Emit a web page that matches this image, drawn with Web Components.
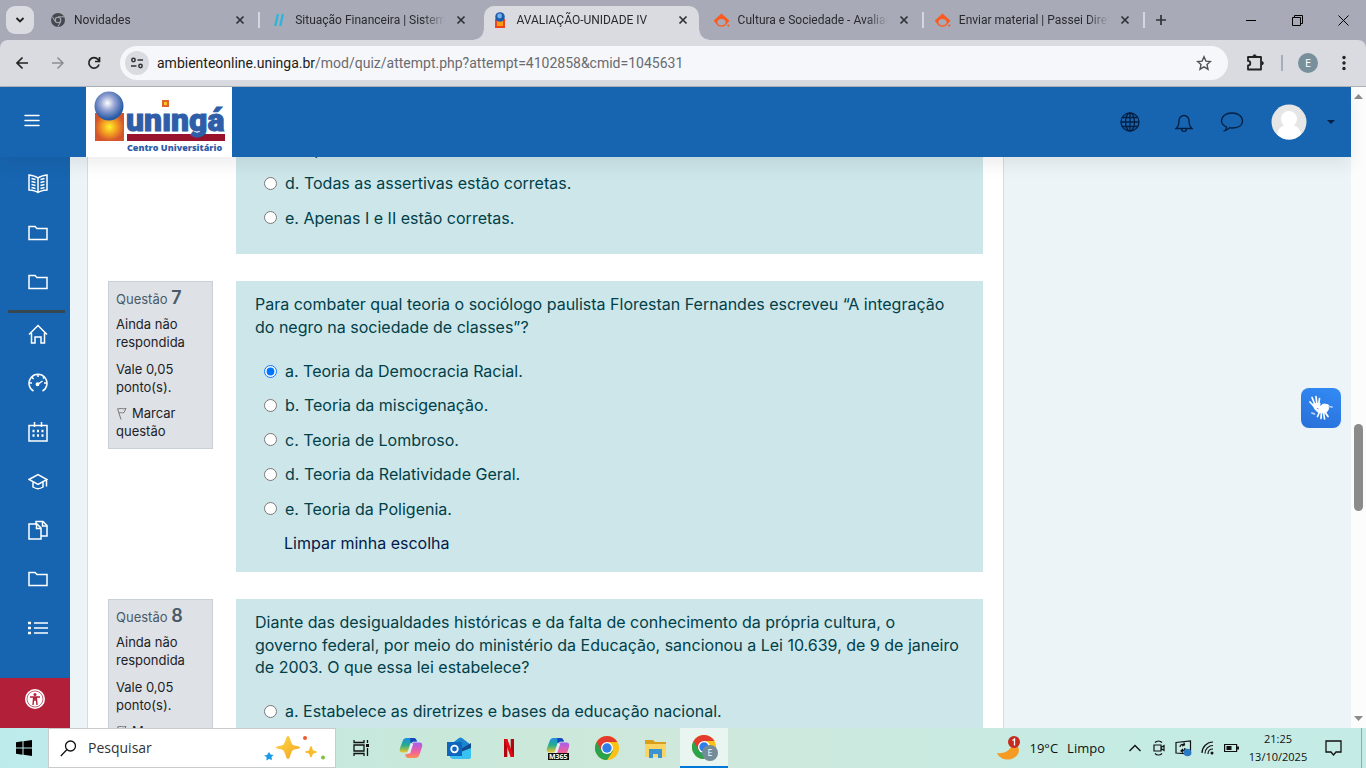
<!DOCTYPE html>
<html lang="pt-br">
<head>
<meta charset="utf-8">
<meta name="viewport" content="width=device-width, initial-scale=1">
<title>AVALIAÇÃO-UNIDADE IV</title>
<style>
	:root {
		--font-ui: "Open Sans", "Noto Sans", sans-serif;
		--font-chrome: Roboto, "Open Sans", sans-serif;
		--font-page: Inter, "Open Sans", sans-serif;
		--chrome-strip: #a8abb7;
		--chrome-bar: #dadbe0;
		--brand: #1765b0;
		--question: #cde6e9;
		--page: #ecf4f8;
	}
	html, body { height: 100%; margin: 0; }
	body {
		display: flex;
		flex-direction: column;
		overflow: hidden;
		font-family: var(--font-ui);
	}
</style>
</head>
<body>
	<tab-strip>
		<browser-tab icon="chrome">Novidades</browser-tab>
		<browser-tab icon="slashes" noline>Situação Financeira | Sistema</browser-tab>
		<browser-tab icon="uninga" active>AVALIAÇÃO-UNIDADE IV</browser-tab>
		<browser-tab icon="passei">Cultura e Sociedade - Avaliaç</browser-tab>
		<browser-tab icon="passei">Enviar material | Passei Direto</browser-tab>
	</tab-strip>
	<browser-toolbar>
		<span slot="host">ambienteonline.uninga.br</span>
		<span slot="path">/mod/quiz/attempt.php?attempt=4102858&amp;cmid=1045631</span>
	</browser-toolbar>
	<moodle-page>
		<quiz-question>
			<answer-option>c. Apenas</answer-option>
			<answer-option>d. Todas as assertivas estão corretas.</answer-option>
			<answer-option>e. Apenas I e II estão corretas.</answer-option>
		</quiz-question>
		<quiz-question number="7" clear>
			<span slot="text">Para combater qual teoria o sociólogo paulista Florestan Fernandes escreveu “A integração do negro na sociedade de classes”?</span>
			<answer-option checked>a. Teoria da Democracia Racial.</answer-option>
			<answer-option>b. Teoria da miscigenação.</answer-option>
			<answer-option>c. Teoria de Lombroso.</answer-option>
			<answer-option>d. Teoria da Relatividade Geral.</answer-option>
			<answer-option>e. Teoria da Poligenia.</answer-option>
		</quiz-question>
		<quiz-question number="8">
			<span slot="text">Diante das desigualdades históricas e da falta de conhecimento da própria cultura, o governo federal, por meio do ministério da Educação, sancionou a Lei 10.639, de 9 de janeiro de 2003. O que essa lei estabelece?</span>
			<answer-option>a. Estabelece as diretrizes e bases da educação nacional.</answer-option>
		</quiz-question>
	</moodle-page>
	<task-bar></task-bar>

<script>
// shared drawings, used inside several shadow roots
const ICONS = {
	chrome: `<svg width="14" height="14" viewBox="0 0 14 14"><circle cx="7" cy="7" r="7" fill="#45484d"/><path d="M7 3.8h6.2M4.2 8.6 1.2 3.5M9.8 8.6 6.8 13.8" stroke="#a8abb7"/><circle cx="7" cy="7" r="3.3" fill="#a8abb7"/><circle cx="7" cy="7" r="2.2" fill="#45484d"/></svg>`,
	slashes: `<svg width="14" height="14" viewBox="0 0 14 14"><path d="M3.2 13 6 1M8.2 13 11 1" stroke="#27b6dc" stroke-width="2.2"/></svg>`,
	uninga: `<svg width="14" height="16" viewBox="0 0 14 16"><path d="M2 7h10v9H2z" fill="#f0431d"/><path d="M4 9h6v5H4z" fill="#fb9b12"/><circle cx="7" cy="5" r="4.8" fill="#1c5cae"/><circle cx="6.6" cy="4" r="2.4" fill="#77b2e6"/></svg>`,
	passei: `<svg width="16" height="15" viewBox="0 0 16 15"><path fill="#fb5b21" fill-rule="evenodd" d="M7.500.4 14.800 7a1 1 0 0 1 0 1.400L12.600 11a6 6 0 0 1-10.200 0L.3 8.400a1 1 0 0 1 0-1.400zM7.500 6c-2.500 0-4.100 1.600-4.100 3.300S5 12.400 7.500 12.400s4.100-1.300 4.100-3.100S10 6 7.500 6z"/><circle cx="14.300" cy="12.600" r="1.100" fill="#fb5b21"/></svg>`,
	close: `<svg width="10" height="10" viewBox="0 0 10 10"><path d="m1.500 1.500 7 7m0-7-7 7" stroke="#303238" stroke-width="1.700"/></svg>`,
	folder: `<path d="M1 3.500h6l2 2h10v11H1z"/>`,
	bigChrome: `<svg width="24" height="24" viewBox="0 0 24 24"><circle cx="12" cy="12" r="12" fill="#fbc116"/><path d="M12 12 1.600 6A12 12 0 0 0 12 24l6-9z" fill="#2ba24c"/><path d="M1.600 6A12 12 0 0 1 22.400 6H12v6l-5.200 3z" fill="#e33b2e"/><circle cx="12" cy="12" r="6" fill="#fff"/><circle cx="12" cy="12" r="4.700" fill="#2f7de9"/></svg>`,
	copilot: `<svg width="24" height="22" viewBox="0 0 26 24"><defs><linearGradient id="a" x2="0" y2="1"><stop stop-color="#1b8de6"/><stop offset=".5" stop-color="#26ad8b"/><stop offset="1" stop-color="#f4c629"/></linearGradient><linearGradient id="b" x2="0" y2="1"><stop stop-color="#a55df0"/><stop offset=".6" stop-color="#f0609a"/><stop offset="1" stop-color="#fb9250"/></linearGradient></defs><path d="M8 1h8c2 0 3 2 3.500 4h-4c-2 0-3 1-3.500 3l-2 6c-.7 2-1.500 3-3.500 3H4c-3 0-4-2-3-5L4 4c.8-2 2-3 4-3z" fill="url(#a)"/><path d="M12 1h4c2 0 3 2 3.500 4h-4l-3 2z" fill="#1647bd"/><path d="M18 23h-8c-2 0-3-2-3.500-4 3 0 4-1 4.500-3l2-7c.7-2 1.500-3 3.500-3H22c3 0 4 2 3 5l-3 9c-.8 2-2 3-4 3z" fill="url(#b)"/><path d="m13 7-3.500 11h2.500L15.500 7z" fill="#e7edf3"/></svg>`
};

class BrowserTab extends HTMLElement {
	constructor() {
		super();
		this.attachShadow({ mode: 'open' });
	}

	connectedCallback() {
		this.shadowRoot.innerHTML = `
	<style>
		:host { display: block; flex: 1 1 0; min-width: 0; height: 40px; font: 12px var(--font-chrome); color: #282a2e; }
		.tab { position: relative; display: flex; align-items: center; gap: 8px; height: 34px; margin: 6px 3px 0 4px; padding: 0 8px 6px 8px; box-sizing: border-box; border-radius: 10px 10px 0 0; }
		.icon { display: flex; width: 16px; justify-content: center; flex: none; }
		.title { flex: 1; min-width: 0; overflow: hidden; white-space: nowrap; line-height: 20px; -webkit-mask-image: linear-gradient(to left, transparent, #000 22px); }
		button { display: flex; padding: 3px; border: 0; background: none; }
		:host(:not([active]):not([noline])) .tab::after { content: ""; position: absolute; right: -4px; top: 6px; width: 2px; height: 16px; background: #d5d7de; }
		:host([active]) .tab { background: var(--chrome-bar); }
		:host([active]) .tab::before, :host([active]) .tab::after { content: ""; position: absolute; bottom: 0; width: 10px; height: 10px; }
		:host([active]) .tab::before { right: 100%; background: radial-gradient(circle at 0 0, transparent 9px, var(--chrome-bar) 10px); }
		:host([active]) .tab::after { left: 100%; background: radial-gradient(circle at 100% 0, transparent 9px, var(--chrome-bar) 10px); }
	</style>
	<div class="tab">
		<span class="icon">${ICONS[this.getAttribute('icon')]}</span>
		<span class="title"><slot></slot></span>
		<button aria-label="Fechar">${ICONS.close}</button>
	</div>`;
	}
}

class TabStrip extends HTMLElement {
	constructor() {
		super();
		this.attachShadow({ mode: 'open' }).innerHTML = `
	<style>
		:host { display: flex; flex: none; height: 40px; background: var(--chrome-strip); }
		button { display: flex; align-items: center; justify-content: center; flex: none; padding: 0; border: 0; background: none; }
		.search { width: 28px; height: 28px; margin: 6px 4px 0 6px; border-radius: 9px; background: var(--chrome-bar); }
		.tabs { display: flex; flex: 0 1 1106px; min-width: 0; }
		.new { width: 33px; height: 40px; }
		.window { display: flex; margin-left: auto; }
		.window button { width: 46px; height: 40px; }
	</style>
	<button class="search" aria-label="Pesquisar guias"><svg width="10" height="8" viewBox="0 0 10 8"><path d="m1.500 2 3.500 3.500L8.500 2" fill="none" stroke="#222" stroke-width="1.900"/></svg></button>
	<div class="tabs"><slot></slot></div>
	<button class="new" aria-label="Nova guia"><svg width="12" height="12" viewBox="0 0 12 12"><path d="M6 1v10M1 6h10" stroke="#303238" stroke-width="1.700"/></svg></button>
	<div class="window">
		<button aria-label="Minimizar"><svg width="10" height="10"><path d="M0 5.500h10" stroke="#000"/></svg></button>
		<button aria-label="Restaurar"><svg width="11" height="11" fill="none" stroke="#000"><path d="M.5 2.500h8v8h-8zM2.500 2.500v-2h8v8h-2"/></svg></button>
		<button aria-label="Fechar janela"><svg width="11" height="11"><path d="m.5.5 10 10m0-10-10 10" stroke="#000"/></svg></button>
	</div>`;
	}
}

class BrowserToolbar extends HTMLElement {
	constructor() {
		super();
		this.attachShadow({ mode: 'open' }).innerHTML = `
	<style>
		:host { display: block; flex: none; background: var(--chrome-strip); }
		.bar { display: flex; align-items: center; height: 46px; padding-left: 4px; border-bottom: 1px solid #b0b1b6; border-radius: 8px 8px 0 0; background: var(--chrome-bar); }
		button { display: flex; align-items: center; justify-content: center; flex: none; width: 36px; height: 34px; padding: 0; border: 0; background: none; }
		.omnibox { display: flex; align-items: center; flex: 1; min-width: 0; height: 34px; margin-left: 8px; border-radius: 17px; background: #f6f7fa; }
		.omnibox .site { width: 24px; height: 24px; margin: 0 8px 0 5px; border-radius: 50%; background: var(--chrome-bar); }
		.url { flex: 1; min-width: 0; overflow: hidden; white-space: nowrap; font: 14px/20px var(--font-chrome); color: #696b70; outline: 0; }
		.host { color: #1c1d20; }
		.omnibox .star { width: 48px; }
		.ext { width: 53px; }
		.sep { width: 2px; height: 16px; background: #a5aebb; }
		.user { width: 50px; }
		.user span { width: 20px; border-radius: 50%; background: #78909c; color: #fff; font: 11px/20px var(--font-ui); }
		.menu { width: 22px; margin-right: 11px; }
	</style>
	<div class="bar">
		<button aria-label="Voltar"><svg width="14" height="14" fill="none" stroke="#222" stroke-width="1.700"><path d="M13 7H2m5.500-5.500L2 7l5.500 5.500"/></svg></button>
		<button aria-label="Avançar"><svg width="14" height="14" fill="none" stroke="#8d8f95" stroke-width="1.500"><path d="M1 7h11M6.500 1.500 12 7l-5.500 5.500"/></svg></button>
		<button aria-label="Recarregar"><svg width="14" height="14" fill="none" stroke="#222" stroke-width="1.700"><path d="M12 8.500A5.200 5.200 0 1 1 11 3.500l1.500 1.800M12.500 1v4.500H8"/></svg></button>
		<div class="omnibox">
			<button class="site" aria-label="Informações do site"><svg width="14" height="14" fill="none" stroke="#303238" stroke-width="1.500"><circle cx="3.500" cy="4" r="1.700"/><path d="M7.500 4H13M1 10h5.500"/><circle cx="10.500" cy="10" r="1.700"/></svg></button>
			<div class="url" role="textbox" aria-label="Endereço" contenteditable="true" spellcheck="false"><span class="host"><slot name="host"></slot></span><slot name="path"></slot></div>
			<button class="star" aria-label="Favoritar"><svg width="16" height="16" fill="none" stroke="#4d5056" stroke-width="1.400"><path d="m8 1.800 1.900 4.300 4.600.4-3.500 3.100 1 4.600L8 11.800l-4 2.400 1-4.600-3.500-3.100 4.600-.4z"/></svg></button>
		</div>
		<button class="ext" aria-label="Extensões"><svg width="18" height="18" fill="none" stroke="#222" stroke-width="1.800"><path d="M2 3h13v12.500H2v-4a2.300 2.300 0 0 0 0-4.600z" stroke-linejoin="round"/><path d="M7 2.400a1.600 1.600 0 0 1 3.200 0M15.600 7.500a1.700 1.700 0 0 1 0 3.400" fill="#222" stroke-width="1"/></svg></button>
		<span class="sep"></span>
		<button class="user" aria-label="Perfil"><span>E</span></button>
		<button class="menu" aria-label="Menu"><svg width="4" height="16" fill="#222"><circle cx="2" cy="2.500" r="1.700"/><circle cx="2" cy="8" r="1.700"/><circle cx="2" cy="13.500" r="1.700"/></svg></button>
	</div>`;
	}
}

class AppHeader extends HTMLElement {
	constructor() {
		super();
		this.attachShadow({ mode: 'open' }).innerHTML = `
	<style>
		:host { display: flex; align-items: center; flex: none; height: 70px; background: var(--brand); box-shadow: 0 8px 16px rgba(0, 0, 0, .07); z-index: 1; color: #051f42; }
		button { display: flex; align-items: center; justify-content: center; padding: 0; border: 0; background: none; color: inherit; }
		.drawer { align-self: flex-start; width: 86px; height: 66px; padding-right: 22px; }
		.brand { display: block; width: 146px; height: 70px; background: #fff; }
		.tools { display: flex; align-items: center; gap: 27px; margin-left: auto; padding-right: 16px; }
		.tools svg { fill: none; stroke: currentColor; stroke-width: 1.300; }
		.globe { margin-right: 8px; }
		.account { gap: 20px; }
		.account .caret { fill: currentColor; stroke: none; }
	</style>
	<button class="drawer" aria-label="Menu lateral"><svg width="16" height="13" stroke="#fff" stroke-width="1.500" stroke-linecap="round"><path d="M1 1.500h14M1 6.500h14M1 11.500h14"/></svg></button>
	<a class="brand" href="#" aria-label="Uningá">
		<svg width="146" height="70">
			<defs>
				<radialGradient id="ball" cx=".45" cy=".4" r=".55"><stop stop-color="#fff"/><stop offset=".45" stop-color="#98a5d4"/><stop offset="1" stop-color="#285ba6"/></radialGradient>
				<radialGradient id="sun"><stop stop-color="#fff22e"/><stop offset=".5" stop-color="#f3a021"/><stop offset="1" stop-color="#d4552b"/></radialGradient>
			</defs>
			<path d="M9 26h29v28H9z" fill="url(#sun)"/>
			<circle cx="23" cy="19" r="14.500" fill="url(#ball)"/>
			<path d="M41 47h98v7H41z" fill="#98122e"/>
			<text x="40" y="44" fill="#2f5da8" stroke="#2f5da8" stroke-width="1" font-family="Roboto, Liberation Sans, sans-serif" font-weight="900" font-size="32">uningá</text>
			<path d="M75 17h10v9H75z" fill="#fff"/>
			<path d="M76 13h7v7h-7z" fill="#df6528"/><path d="M78 15h3v3h-3z" fill="#fbc42e"/>
			<text x="41" y="64" fill="#2f5da8" font-family="Open Sans, sans-serif" font-weight="800" font-size="9">Centro Universitário</text>
		</svg>
	</a>
	<div class="tools">
		<button class="globe" aria-label="Idioma"><svg width="20" height="20"><circle cx="10" cy="10" r="9"/><ellipse cx="10" cy="10" rx="4.500" ry="9"/><path d="M10 1v18M1 10h18M2.500 5.500h15M2.500 14.500h15"/></svg></button>
		<button aria-label="Notificações"><svg width="18" height="20"><path d="M1 16.500c2-1.500 3-3 3-8a5 5 0 0 1 10 0c0 5 1 6.500 3 8zM6.500 17a2.500 2.500 0 0 0 5 0"/></svg></button>
		<button aria-label="Mensagens"><svg width="24" height="20"><path d="M5 18.500c1.300-1 1.500-2 1.500-3.500C3.500 13.500 1.500 11.500 1.500 9c0-4.500 4.500-8 10.500-8s10.500 3.500 10.500 8-4.500 7-10.500 7c-1 0-2 0-2.500-.3-1 1.300-2.500 2.500-4.500 2.800z"/></svg></button>
		<button class="account" aria-label="Menu do usuário">
			<svg width="36" height="36" viewBox="0 0 36 36"><defs><clipPath id="round"><circle cx="18" cy="18" r="17.500"/></clipPath></defs><g clip-path="url(#round)" stroke="none"><path d="M0 0h36v36H0z" fill="#e6e6e6"/><circle cx="18" cy="15" r="8" fill="#fff"/><path d="M6 36V30c1-5 4-8 8-9h8c4 1 7 4 8 9v6z" fill="#fff"/></g></svg>
			<svg class="caret" width="8" height="4"><path d="M0 0h8L4 4z"/></svg>
		</button>
	</div>`;
	}
}

const navIcons = [
	['Cursos', `<path d="M10 4c-2-1.500-5-2.500-9-3v15c4 .3 7 1 9 2.500 2-1.500 5-2.200 9-2.500V1c-4 .5-7 1.500-9 3zM10 4v14.500M3.500 4.500l4 1M3.500 7.500l4 1M3.500 10.500l4 1M3.500 13.500l4 1M16.500 4.500l-4 1M16.500 7.500l-4 1M16.500 10.500l-4 1M16.500 13.500l-4 1"/>`],
	['Pasta', ICONS.folder],
	['Pasta', ICONS.folder],
	['Início', `<path d="m1 10.500 9-9 9 9M3.500 9v10H7v-6h6v6h3.500V9"/>`],
	['Painel', `<path d="M5.500 18a9 9 0 1 1 9 0M10 1v3M1.500 10H4M16 10h2.500M3.600 4l2 2M16.400 4l-1.500 1.500M9.500 11.500 14.500 8"/><circle cx="9.500" cy="11.300" r="1.200" fill="#fff"/>`],
	['Calendário', `<path d="M1 3.500h18V19H1zM6.500 0v5M13.500 0v5"/><path d="M4.500 9h2M9 9h2M13.500 9h2M4.500 13.500h2M9 13.500h2M13.500 13.500h2" stroke-width="2.400"/>`],
	['Disciplinas', `<path d="m1 8.500 9-5 9 5-9 5zM5 11v5c3 2 7 2 10 0v-5M18.500 8.500v7"/>`],
	['Arquivos', `<path d="M1 4h8l4 4v11H1zM8.500 4v4.500H13M8 4V1.500h7l4 4V16h-6M14.500 1.500V6H19"/>`],
	['Pasta', ICONS.folder],
	['Lista', `<path d="M6 5h14M6 10h14M6 15h14"/><path d="M0 5h3M0 10h3M0 15h3" stroke-width="2.600"/>`]
];

class SideNav extends HTMLElement {
	constructor() {
		super();
		this.attachShadow({ mode: 'open' });
		const links = navIcons.map(([label, path], i) => `
			<a href="#" aria-label="${label}"><svg width="20" height="20" viewBox="0 0 20 20">${path}</svg></a>
			${i === 2 ? '<hr>' : ''}`).join('');
		this.shadowRoot.innerHTML = `
	<style>
		:host { display: flex; flex-direction: column; flex: none; width: 70px; background: var(--brand); }
		nav { flex: 1; min-height: 0; overflow: hidden; padding-top: 17px; }
		nav a { display: block; height: 20px; padding-left: 28px; }
		a + a { margin-top: 29px; }
		hr { height: 3px; margin: 18px 5px 11px 8px; border: 0; background: #37474f; }
		svg { display: block; fill: none; stroke: #fff; stroke-width: 1.500; }
		.access { display: flex; justify-content: center; height: 50px; padding: 11px 0 0; box-sizing: border-box; border: 0; background: #b21f38; }
		.access svg { stroke: none; }
	</style>
	<nav>${links}</nav>
	<button class="access" aria-label="Acessibilidade"><svg width="20" height="20"><circle cx="10" cy="10" r="10" fill="#fff"/><circle cx="10" cy="10" r="8" fill="none" stroke="#b21f38" stroke-width=".7"/><circle cx="10" cy="5.500" r="1.500" fill="#b21f38"/><path d="M5 8h10M10 8v4M8.700 8l-.7 8M11.300 8l.7 8" stroke="#b21f38" stroke-width="1.400"/></svg></button>`;
	}
}

class AnswerOption extends HTMLElement {
	constructor() {
		super();
		this.attachShadow({ mode: 'open' }).innerHTML = `
	<style>
		:host { display: block; }
		label { display: flex; align-items: center; gap: 8px; }
		input { width: 13px; height: 13px; margin: 0; accent-color: #0075ff; }
	</style>
	<label><input type="radio"><span><slot></slot></span></label>`;
	}

	connectedCallback() {
		this.input = this.shadowRoot.querySelector('input');
		this.input.checked = this.hasAttribute('checked');
		this.input.addEventListener('change', () => {
			this.parentElement.querySelectorAll('answer-option').forEach(o => {
				if (o !== this) o.input.checked = false;
			});
		});
	}
}

class QuizQuestion extends HTMLElement {
	constructor() {
		super();
		this.attachShadow({ mode: 'open' });
	}

	connectedCallback() {
		const number = this.getAttribute('number');
		this.shadowRoot.innerHTML = `
	<style>
		:host { display: flex; align-items: flex-start; gap: 23px; font-family: var(--font-page); }
		.info { flex: none; width: 105px; box-sizing: border-box; padding: 7px 7px 8px; border: 1px solid #cad0d7; background: #dee2e6; font-size: 13px; line-height: 18px; color: #1d2125; }
		.info.empty { visibility: hidden; }
		.info > * { margin: 0 0 9px; font-weight: 400; font-size: inherit; }
		.info h3 { margin-bottom: 6px; line-height: 20px; color: #495a66; }
		.info h3 b { font-size: 18px; line-height: 18px; font-weight: 600; }
		.info p + p { margin-bottom: 8px; }
		.info a { display: block; margin: 0; color: inherit; text-decoration: none; }
		.info svg { vertical-align: -2px; margin-right: 4px; }
		.content { flex: 1; min-width: 0; box-sizing: border-box; padding: 12px 22px 25px 19px; background: var(--question); color: #004049; font-size: 16px; line-height: 1.4; }
		:host([clear]) .content { padding-bottom: 18px; }
		.text { margin: 0 0 22px; }
		.answers { display: flex; flex-direction: column; gap: 12px; padding-left: 9px; }
		.answers a { padding-left: 20px; color: #001a4a; text-decoration: none; }
	</style>
	<div class="info ${number ? '' : 'empty'}">
		${number ? `<h3>Questão <b>${number}</b></h3>
		<p>Ainda não respondida</p>
		<p>Vale 0,05 ponto(s).</p>
		<a href="#"><svg width="12" height="13" fill="none" stroke="#777"><path d="M1.500 1.500 5 12.500M2 2c3-1.500 4 .5 8-.5L8 5.500c-2 1-3-.5-5 .5"/></svg>Marcar questão</a>` : ''}
	</div>
	<div class="content">
		${number ? '<p class="text"><slot name="text"></slot></p>' : ''}
		<div class="answers">
			<slot></slot>
			${this.hasAttribute('clear') ? '<a href="#">Limpar minha escolha</a>' : ''}
		</div>
	</div>`;
	}
}

class PageScrollbar extends HTMLElement {
	constructor() {
		super();
		this.attachShadow({ mode: 'open' }).innerHTML = `
	<style>
		:host { display: flex; flex-direction: column; align-items: center; flex: none; width: 15px; padding: 7px 0; box-sizing: border-box; background: #fcfcfc; }
		.track { display: flex; flex-direction: column; align-items: center; flex: 1; }
		.before { flex: 326 1 0; }
		.thumb { flex: 87 1 0; width: 9px; border-radius: 5px; background: #8b8b8b; }
		.after { flex: 206 1 0; }
	</style>
	<svg width="9" height="5"><path d="M0 5 4.500 0 9 5z" fill="#8b8b8b"/></svg>
	<div class="track"><div class="before"></div><div class="thumb"></div><div class="after"></div></div>
	<svg width="9" height="5"><path d="M0 0h9L4.500 5z" fill="#8b8b8b"/></svg>`;
	}
}

class MoodlePage extends HTMLElement {
	constructor() {
		super();
		this.attachShadow({ mode: 'open' }).innerHTML = `
	<style>
		:host { position: relative; display: flex; flex: 1; min-height: 0; background: var(--page); }
		.app { display: flex; flex-direction: column; flex: 1; min-width: 0; }
		.body { display: flex; flex: 1; min-height: 0; }
		main { flex: 1; min-width: 0; overflow: hidden; }
		.card { display: flex; flex-direction: column; gap: 27px; margin: 0 347px 0 17px; padding: 0 20px 40px; border: 1px solid #d5dcdf; border-width: 0 1px; background: #fff; }
		.libras { position: absolute; right: 25px; top: 50%; transform: translateY(-50%); width: 40px; height: 40px; padding: 0; border: 0; border-radius: 8px; background: linear-gradient(200deg, #338bf6, #286fd8); }
		.libras svg { display: block; }
	</style>
	<div class="app">
		<app-header></app-header>
		<div class="body">
			<side-nav></side-nav>
			<main><div class="card"><slot></slot></div></main>
		</div>
	</div>
	<page-scrollbar></page-scrollbar>
	<button class="libras" aria-label="Acessível em Libras"><svg width="40" height="40" fill="none" stroke="#fff" stroke-width="1.700" stroke-linecap="round"><path d="M14 19.500 9 14M14.500 18 11 9.500M16 17.500 15 8.500M17.500 18l1-7.500M24 24l3 4.500M22.500 24l1 7M20.500 23.500 20 30.500M19 23l-2.500 5.500M17 19.500l4-1.500"/><path d="m11.500 16.500 3 5.500 3 2.500-.5-2.500-2-1.500 3.500-2 .5-3z" fill="#fff" stroke-width="1"/><path d="M17 21.500c2-1.500 2.500-5 6.500-5.500l4 1c.7 4-1 7-3.500 8l-6-.5z" fill="#fff" stroke-width="1"/><path d="m28 18.500 3 .5M11 25l2.500 1" stroke="#b9d7fb"/></svg></button>`;
	}

	connectedCallback() {
		// attempt resumes further down the page
		const main = this.shadowRoot.querySelector('main');
		main.scrollTop = 31;
		requestAnimationFrame(() => { main.scrollTop = 31; });
	}
}

class TaskBar extends HTMLElement {
	constructor() {
		super();
		this.attachShadow({ mode: 'open' }).innerHTML = `
	<style>
		:host { display: flex; align-items: stretch; flex: none; height: 40px; background: linear-gradient(to right, #bdebec, #c9e8da 32%, #cfe8dc 52%, #c5ebe3 80%, #c4ebe5); color: #111; font-size: 13px; }
		button { display: flex; align-items: center; justify-content: center; position: relative; flex: none; width: 49px; padding: 0; border: 0; background: none; color: inherit; font: inherit; }
		button.start { width: 48px; }
		.search { display: flex; align-items: center; gap: 11px; width: 288px; box-sizing: border-box; margin-right: 1px; padding: 0 8px 0 11px; border: 1px solid #c9cccc; background: #fff; }
		input { flex: 1; min-width: 0; padding: 0; border: 0; outline: 0; background: none; font: 14px/20px var(--font-ui); }
		input::placeholder { color: #333; opacity: 1; }
		button.active { background: #e8f5f0; border-bottom: 2px solid #0078d7; width: 48px; }
		.badge { position: absolute; left: 22px; top: 17px; width: 16px; border-radius: 50%; background: #748b98; color: #fff; font: 9px/16px var(--font-ui); }
		.m365 { position: absolute; left: 15px; top: 25px; padding: 0 1px; background: #111; color: #fff; font: 700 7px/7px var(--font-ui); }
		.tray { display: flex; align-items: center; margin-left: auto; }
		.tray button { height: 40px; width: 24px; }
		.tray .weather { width: auto; gap: 9px; margin-right: 18px; }
		.tray .clock { flex-direction: column; width: 66px; font-size: 11px; line-height: 18px; margin: 0 4px 0 2px; }
		.tray .notes { width: 36px; margin-right: 10px; }
		.edge { width: 4px; height: 40px; border-left: 1px solid #93aaa5; }
	</style>
	<button class="start" aria-label="Iniciar"><svg width="16" height="16"><path d="M0 2.200 6.500 1.300V7.500H0zM7.500 1.200 16 0v7.500H7.500zM0 8.500h6.500v6.200L0 13.800zM7.500 8.500H16V16l-8.500-1.200z"/></svg></button>
	<label class="search">
		<svg width="17" height="17" fill="none" stroke="#111" stroke-width="1.300"><circle cx="10.500" cy="6" r="5"/><path d="M7 9.500.8 16"/></svg>
		<input type="text" placeholder="Pesquisar" aria-label="Pesquisar">
		<svg width="64" height="32"><defs><linearGradient id="gold" x2="1" y2="1"><stop stop-color="#ffd84a"/><stop offset="1" stop-color="#f2a41c"/></linearGradient></defs>
			<path d="M25 4c2 0 3 7 4.500 8.500S37 14 37 15.500 31 17 29.500 18.500 27 27 25 27s-3-7-4.500-8.500S13 17 13 15.500s6-1.500 7.500-3S23 4 25 4z" fill="url(#gold)"/>
			<path d="M48 14c1 0 1.500 3.500 2 4.200s4 .8 4 1.800-3.400 1-4 1.800-1 3.700-2 3.700-1.500-3-2-3.700-4-.8-4-1.800 3.400-1 4-1.800 1-4.200 2-4.200z" fill="#f8bb2c"/>
			<path d="m6 20 1.500 2.500 3 .5-2 2 .5 3-3-1-2.500 1.500V25L1 23.500l3-.5z" fill="#1a9be8"/><circle cx="42" cy="6" r="2" fill="#ee5a2b"/><circle cx="60" cy="25.500" r="2" fill="#7fc241"/></svg>
	</label>
	<button aria-label="Visão de tarefas"><svg width="17" height="16" fill="none" stroke="#111" stroke-width="1.300"><path d="M1 0v2.500h10V0M1 16v-2.500h10V16M1 5h10v6H1zM14.500 0v3M14.500 8v8"/><path d="M13 4h3v3h-3z" fill="#111" stroke="none"/></svg></button>
	<button aria-label="Copilot">${ICONS.copilot}</button>
	<button aria-label="Outlook"><svg width="25" height="24"><path d="M3 9 12 2q1.500-1 3 0l9 7v11a2 2 0 0 1-2 2H5a2 2 0 0 1-2-2z" fill="#1a86d0"/><path d="m14 10 10-6v7l-9 6z" fill="#134a8d" transform="translate(0 3)"/><path d="M3 20 24 12v9a2 2 0 0 1-2 2H5z" fill="#39c1f1"/><path d="M0 6h15v14H0z" fill="#0f66bd"/><circle cx="7.500" cy="13" r="3.300" fill="none" stroke="#fff" stroke-width="1.800"/></svg></button>
	<button aria-label="Netflix"><svg width="10" height="18"><path d="M0 0h3.300v18H0zM6.700 0H10v18H6.700z" fill="#b1060f"/><path d="M0 0h3.300L10 18H6.700z" fill="#e50914"/></svg></button>
	<button aria-label="Microsoft 365">${ICONS.copilot}<span class="m365">M365</span></button>
	<button aria-label="Chrome">${ICONS.bigChrome}</button>
	<button aria-label="Explorador de Arquivos"><svg width="22" height="19"><path d="M0 1h8l2 2h11v5H0z" fill="#d99e1b"/><path d="M0 5h21v13H0z" fill="#fcd463"/><path d="M4 10h13v9h-4v-4H8v4H4z" fill="#3a94d4"/></svg></button>
	<button class="active" aria-label="Chrome - E">${ICONS.bigChrome}<span class="badge">E</span></button>
	<div class="tray">
		<button class="weather"><svg width="23" height="24"><path d="M0 17c8 1 14-3 15-9 7 0 8 6 6 10-4 7-17 8-21-1z" fill="#f59a23"/><circle cx="17" cy="6" r="6" fill="#c62b1f"/><path d="M15.500 4.500 17.500 3v6.500" stroke="#fff" stroke-width="1.300" fill="none"/></svg><span>19°C</span><span>Limpo</span></button>
		<button aria-label="Ícones ocultos"><svg width="12" height="8" fill="none" stroke="#111" stroke-width="1.300"><path d="m.5 7 5.500-5.500L11.500 7"/></svg></button>
		<button aria-label="Câmera"><svg width="12" height="16" fill="none" stroke="#111" stroke-width="1.200"><path d="M1 5h7v6H1zM8 7.500l3-2v5l-3-2M2 2.500c2-2 5-2 7 0M2 13.500c2 2 5 2 7 0"/></svg></button>
		<button aria-label="Sincronização"><svg width="17" height="17" fill="none" stroke="#111" stroke-width="1.200"><path d="M1 2.500 15.500 1v13L1 13zM5 7c0-2 2-3 4-2.500M9 2.500 9.500 5 7 6M10 8c0 2-1 3-3 3M8 9l-2 2 2 1.500"/><circle cx="12.500" cy="12.500" r="3.800" fill="#2b78c5" stroke="none"/></svg></button>
		<button aria-label="Rede"><svg width="13" height="14" fill="none" stroke="#111" stroke-width="1.200"><path d="M1 12C1 6 6 1 12 1M4 12.500C4 8 7.500 4.500 12 4.500M7 13c0-3 2-5 5-5"/><circle cx="11" cy="12" r="1.500" fill="#111" stroke="none"/></svg></button>
		<button aria-label="Bateria"><svg width="15" height="10" fill="none" stroke="#111" stroke-width="1.200"><path d="M.6 1.500h12v7H.6z"/><path d="M2.500 3h5v4h-5zM13 3.500h2v3h-2z" fill="#111" stroke="none"/></svg></button>
		<button class="clock"><span>21:25</span><span>13/10/2025</span></button>
		<button class="notes" aria-label="Notificações"><svg width="17" height="16" fill="none" stroke="#111" stroke-width="1.300"><path d="M1 1h15v11h-5l-2.500 3L6 12H1z"/></svg></button>
		<span class="edge"></span>
	</div>`;
	}
}

customElements.define('browser-tab', BrowserTab);
customElements.define('tab-strip', TabStrip);
customElements.define('browser-toolbar', BrowserToolbar);
customElements.define('app-header', AppHeader);
customElements.define('side-nav', SideNav);
customElements.define('answer-option', AnswerOption);
customElements.define('quiz-question', QuizQuestion);
customElements.define('page-scrollbar', PageScrollbar);
customElements.define('moodle-page', MoodlePage);
customElements.define('task-bar', TaskBar);
</script>
</body>
</html>
